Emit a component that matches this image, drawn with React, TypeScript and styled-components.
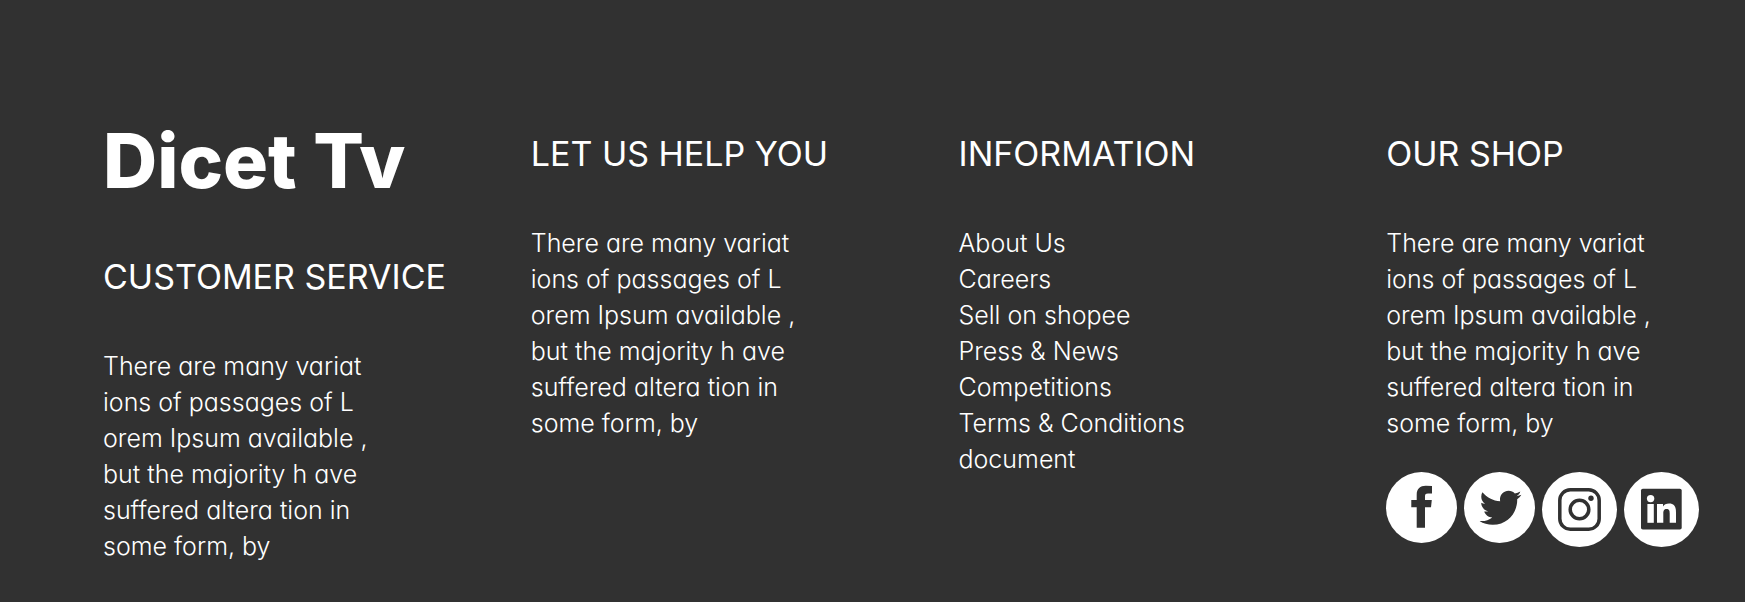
import React from 'react';
import styled, { createGlobalStyle } from 'styled-components';
import { FaTwitter } from 'react-icons/fa';

const ink = '#313131';

const GlobalStyle = createGlobalStyle`
  *, *::before, *::after { box-sizing: border-box; }
  body {
    margin: 0;
    background: ${ink};
    color: #fff;
    font-family: Inter, "Open Sans", sans-serif;
    font-feature-settings: "cv11";
  }
`;

const Footer = styled.footer`
  display: grid;
  grid-template-columns: repeat(4, minmax(0, 1fr));
  column-gap: 84px;
  align-items: start;
  min-height: 100vh;
  padding: 127px 15px 40px 103px;
  background: ${ink};
  border-bottom: 1px solid #2e292d;
`;

const Column = styled.section`
  min-width: 0;
`;

const Logo = styled.a`
  display: block;
  margin-bottom: 55px;
  color: inherit;
  font-size: 75px;
  font-weight: 800;
  line-height: 68px;
  text-decoration: none;
  white-space: nowrap;
`;

const Heading = styled.h2`
  margin: 0 0 44px;
  font-size: 34px;
  font-weight: 400;
  line-height: 54px;
  text-transform: uppercase;
  white-space: nowrap;
`;

const Text = styled.p`
  margin: 0;
  font-size: 25px;
  font-weight: 350;
  line-height: 36px;
  white-space: pre-line;
`;

const LinkList = styled.ul`
  margin: 0;
  padding: 0;
  list-style: none;
  font-size: 25px;
  font-weight: 350;
  line-height: 36px;
`;

const TextLink = styled.a`
  color: inherit;
  text-decoration: none;
`;

const SocialList = styled.ul`
  display: flex;
  align-items: flex-start;
  gap: 7px;
  margin: 31px 0 0;
  padding: 0;
  list-style: none;
`;

const SocialLink = styled.a<{ $size: number }>`
  display: block;
  width: ${({ $size }) => $size}px;
  height: ${({ $size }) => $size}px;
  color: ${ink};

  > svg {
    display: block;
    width: 100%;
    height: 100%;
  }
`;

const blurb = `There are many variat
ions of passages of L
orem Ipsum available ,
but the majority h ave
suffered altera tion in
some form, by`;

const links = [
  'About Us',
  'Careers',
  'Sell on shopee',
  'Press & News',
  'Competitions',
  'Terms & Conditions',
  'document',
];

const FacebookIcon = () => (
  <svg viewBox="0 0 71 71" aria-hidden="true">
    <circle cx="35.5" cy="35.5" r="35.5" fill="#fff" />
    <path
      fill="currentColor"
      d="M46 14v7.5h-4c-2.6 0-3 1.2-3 3.2V28h6.8l-.8 7.3h-6v20.4h-8.3V35.3h-5.4V28h5.4v-5.5c0-6 3.5-8.8 9-8.8z"
    />
  </svg>
);

const TwitterIcon = () => (
  <svg viewBox="0 0 71 71" aria-hidden="true">
    <circle cx="35.5" cy="35.5" r="35.5" fill="#fff" />
    <FaTwitter x="15.5" y="14.8" size={42} />
  </svg>
);

const InstagramIcon = () => (
  <svg viewBox="0 0 75 75" aria-hidden="true">
    <circle cx="37.5" cy="37.5" r="37.5" fill="#fff" />
    <g fill="none" stroke="currentColor" strokeWidth="3.5">
      <rect x="17.8" y="17.8" width="39.4" height="39.4" rx="10.5" />
      <circle cx="37.5" cy="37.5" r="9.3" />
    </g>
    <circle cx="49" cy="26.3" r="2.7" fill="currentColor" />
  </svg>
);

const LinkedInIcon = () => (
  <svg viewBox="0 0 75 75" aria-hidden="true">
    <circle cx="37.5" cy="37.5" r="37.5" fill="#fff" />
    <rect x="17" y="16.8" width="40.7" height="40.7" rx="1.8" fill="currentColor" />
    <g fill="#fff">
      <circle cx="26.6" cy="26.6" r="3.7" />
      <rect x="23.4" y="32" width="6.4" height="18.8" />
      <path d="M33 32h6v2.6c1-1.8 3.2-3.1 6-3.1 5.6 0 7 3.6 7 8.9v10.4h-6.3v-9.2c0-2.4-.2-4.6-3-4.6s-3.4 2-3.4 4.5v9.3H33z" />
    </g>
  </svg>
);

const socials = [
  { name: 'Facebook', size: 71, Icon: FacebookIcon },
  { name: 'Twitter', size: 71, Icon: TwitterIcon },
  { name: 'Instagram', size: 75, Icon: InstagramIcon },
  { name: 'LinkedIn', size: 75, Icon: LinkedInIcon },
];

export default function App() {
  return (
    <>
      <GlobalStyle />
      <Footer>
        <Column>
          <Logo href="#">Dicet Tv</Logo>
          <Heading>Customer Service</Heading>
          <Text>{blurb}</Text>
        </Column>
        <Column>
          <Heading>Let us help you</Heading>
          <Text>{blurb}</Text>
        </Column>
        <Column>
          <Heading>Information</Heading>
          <LinkList>
            {links.map((label) => (
              <li key={label}>
                <TextLink href="#">{label}</TextLink>
              </li>
            ))}
          </LinkList>
        </Column>
        <Column>
          <Heading>Our shop</Heading>
          <Text>{blurb}</Text>
          <SocialList>
            {socials.map(({ name, size, Icon }) => (
              <li key={name}>
                <SocialLink href="#" aria-label={name} $size={size}>
                  <Icon />
                </SocialLink>
              </li>
            ))}
          </SocialList>
        </Column>
      </Footer>
    </>
  );
}
